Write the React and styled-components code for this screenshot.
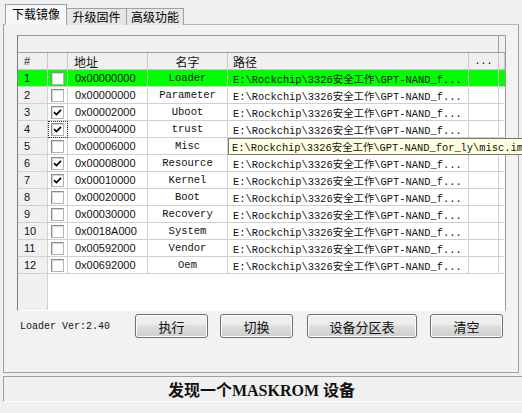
import React from 'react'
import styled, { createGlobalStyle } from 'styled-components'

const GlobalStyle = createGlobalStyle`
  html, body {
    margin: 0;
    padding: 0;
    background: #f0f0f0;
    overflow: hidden;
  }
  body {
    width: 522px;
    height: 413px;
    font-family: "Noto Sans CJK SC", sans-serif;
  }
`

const COLS = '30px 20px 80px 80px 241px 30px 1fr'

const Window = styled.div`
  width: 522px;
  height: 413px;
  box-sizing: border-box;
  padding: 4px 0 0 3px;
  display: flex;
  flex-direction: column;
  background: #f0f0f0;
  overflow: hidden;
`
// 頁籤
const TabBar = styled.div`
  display: flex;
  align-items: flex-end;
  height: 21px;
  padding-left: 2px;
  margin-bottom: -1px;
  position: relative;
  z-index: 1;
`
const Tab = styled.div`
  box-sizing: border-box;
  width: ${props => props.w}px;
  height: ${props => (props.active ? 21 : 17)}px;
  margin-left: ${props => (props.first ? 0 : -1)}px;
  border: 1px solid #a0a0a0;
  border-bottom: ${props => (props.active ? '1px solid #f7f7f7' : 'none')};
  background: ${props => (props.active ? '#f7f7f7' : '#e6e6e6')};
  color: #000;
  font-size: 12px;
  line-height: ${props => (props.active ? 18 : 15)}px;
  text-align: center;
`
const Panel = styled.div`
  box-sizing: border-box;
  width: 516px;
  height: 349px;
  border: 1px solid #a0a0a0;
  border-top-color: #b4b4b4;
  background: #f2f2f2;
  padding: 10px 0 0 13px;
`
// 表格
const Frame = styled.div`
  box-sizing: border-box;
  width: 489px;
  height: 276px;
  border: 1px solid #9a9a9a;
  border-bottom-color: #fff;
  border-left-color: #7a7a7a;
  background: #fff;
  display: flex;
  flex-direction: column;
`
const Strip = styled.div`
  height: 17px;
  box-sizing: border-box;
  background: #f0f0f0;
  display: grid;
  grid-template-columns: 481px 1fr;
  border-bottom: 1px solid #a0a0a0;
  & > div:first-child {
    border-right: 1px solid #a0a0a0;
  }
`
const Row = styled.div`
  position: relative;
  display: grid;
  grid-template-columns: ${COLS};
  height: 17px;
  box-sizing: border-box;
  background: ${props => (props.selected ? '#00ff00' : props.head ? '#f0f0f0' : '#fff')};
  font-size: 11px;
`
const Cell = styled.div`
  box-sizing: border-box;
  height: 17px;
  border-right: 1px solid ${props => (props.last ? 'transparent' : '#d0d0d0')};
  border-bottom: 1px solid #d0d0d0;
  padding: 0 ${props => props.pad || 0}px;
  display: flex;
  align-items: center;
  justify-content: ${props => (props.center ? 'center' : 'flex-start')};
  white-space: nowrap;
  overflow: hidden;
  background: ${props => (props.gray ? '#f0f0f0' : 'transparent')};
  outline: ${props => (props.focus ? '1px dotted #333' : 'none')};
  outline-offset: -1px;
`
const HeadCell = styled(Cell)`
  border-color: #c8c8c8;
  font-family: "Noto Sans CJK SC", sans-serif;
  font-size: 12px;
  color: #111;
`
const NumText = styled.span`
  font-family: "Liberation Sans", sans-serif;
  font-size: 11px;
  color: #111;
`
const MonoText = styled.span`
  font-family: "Liberation Mono", "Noto Sans CJK SC", monospace;
  font-size: ${props => props.size || 10}px;
  color: #111;
`
const Box = styled.span`
  box-sizing: border-box;
  width: 13px;
  height: 13px;
  margin-left: 3px;
  background: #fff;
  border: 1px solid #b4b4b4;
  border-top-color: #8c8c8c;
  border-left-color: #8c8c8c;
  box-shadow: inset 1px 1px 0 #d8d8d8;
  display: flex;
  align-items: center;
  justify-content: center;
`
const Filler = styled.div`
  flex: 1;
  display: grid;
  grid-template-columns: 30px 1fr;
  & > div:first-child {
    background: #f0f0f0;
    border-right: 1px solid #d0d0d0;
  }
`
const Tip = styled.div`
  position: absolute;
  left: 210px;
  top: 0;
  width: 340px;
  height: 17px;
  box-sizing: border-box;
  border: 1px solid #767676;
  background: #ffffe1;
  padding-left: 3px;
  display: flex;
  align-items: center;
  white-space: nowrap;
  overflow: hidden;
  z-index: 2;
`
// 下方
const Footer = styled.div`
  display: flex;
  align-items: center;
  height: 24px;
  margin-top: 3px;
`
const LoaderVer = styled.div`
  width: 118px;
  padding-left: 3px;
  box-sizing: border-box;
  font-family: "Liberation Mono", monospace;
  font-size: 10px;
  color: #111;
`
const Button = styled.button`
  box-sizing: border-box;
  width: ${props => props.w}px;
  height: 24px;
  margin-right: ${props => props.mr || 0}px;
  border: 1px solid #707070;
  border-radius: 3px;
  background: linear-gradient(#f2f2f2 0%, #ebebeb 45%, #dddddd 50%, #cfcfcf 100%);
  box-shadow: inset 0 0 0 1px #fcfcfc;
  font-family: "Noto Sans CJK SC", sans-serif;
  font-size: 13px;
  color: #111;
  padding: 0;
`
const StatusBar = styled.div`
  margin-top: 3px;
  height: 26px;
  box-sizing: border-box;
  border-top: 1px solid #a0a0a0;
  border-left: 1px solid #a0a0a0;
  border-bottom: 1px solid #fff;
  display: flex;
  align-items: center;
  justify-content: center;
  padding-right: 3px;
  font-family: "Liberation Serif", "Noto Sans CJK SC", serif;
  font-weight: 700;
  font-size: 16px;
  color: #111;
`

const PATH = 'E:\\Rockchip\\3326安全工作\\GPT-NAND_f...'
const FULL_PATH = 'E:\\Rockchip\\3326安全工作\\GPT-NAND_for_ly\\misc.img'

const rows = [
  { addr: '0x00000000', name: 'Loader', checked: false },
  { addr: '0x00000000', name: 'Parameter', checked: false },
  { addr: '0x00002000', name: 'Uboot', checked: true },
  { addr: '0x00004000', name: 'trust', checked: true, focus: true },
  { addr: '0x00006000', name: 'Misc', checked: false, tip: true },
  { addr: '0x00008000', name: 'Resource', checked: true },
  { addr: '0x00010000', name: 'Kernel', checked: true },
  { addr: '0x00020000', name: 'Boot', checked: false },
  { addr: '0x00030000', name: 'Recovery', checked: false },
  { addr: '0x0018A000', name: 'System', checked: false },
  { addr: '0x00592000', name: 'Vendor', checked: false },
  { addr: '0x00692000', name: 'Oem', checked: false }
]

const Check = () => (
  <svg width="9" height="9" viewBox="0 0 9 9">
    <path d="M1 4.2 L3.4 6.6 L8 1.8" stroke="#000" strokeWidth="1.7" fill="none" />
  </svg>
)

const tabs = [
  { id: 1, name: '下载镜像', w: 62 },
  { id: 2, name: '升级固件', w: 61 },
  { id: 3, name: '高级功能', w: 58 }
]

export default function App() {
  return (
    <Window>
      <GlobalStyle />
      <TabBar>
        {tabs.map((t, i) => (
          <Tab key={t.id} w={t.w} active={i === 0} first={i === 0}>
            {t.name}
          </Tab>
        ))}
      </TabBar>
      <Panel>
        <Frame>
          <Strip>
            <div />
            <div />
          </Strip>
          <Row head>
            <HeadCell pad={6}>
              <NumText>#</NumText>
            </HeadCell>
            <HeadCell />
            <HeadCell pad={6}>地址</HeadCell>
            <HeadCell center>名字</HeadCell>
            <HeadCell pad={5}>路径</HeadCell>
            <HeadCell center>
              <MonoText>...</MonoText>
            </HeadCell>
            <HeadCell last />
          </Row>
          {rows.map((r, i) => (
            <Row key={i} selected={i === 0}>
              <Cell pad={6} gray={i !== 0}>
                <NumText>{i + 1}</NumText>
              </Cell>
              <Cell focus={r.focus}>
                <Box>{r.checked && <Check />}</Box>
              </Cell>
              <Cell pad={7}>
                <NumText>{r.addr}</NumText>
              </Cell>
              <Cell center>
                <MonoText size={10.5}>{r.name}</MonoText>
              </Cell>
              <Cell pad={5}>
                <MonoText size={10.4}>{PATH}</MonoText>
              </Cell>
              <Cell />
              <Cell last />
              {r.tip && (
                <Tip>
                  <MonoText size={10.4}>{FULL_PATH}</MonoText>
                </Tip>
              )}
            </Row>
          ))}
          <Filler>
            <div />
            <div />
          </Filler>
        </Frame>
        <Footer>
          <LoaderVer>Loader Ver:2.40</LoaderVer>
          <Button w={73} mr={12}>执行</Button>
          <Button w={73} mr={14}>切换</Button>
          <Button w={110} mr={13}>设备分区表</Button>
          <Button w={73}>清空</Button>
        </Footer>
      </Panel>
      <StatusBar>发现一个MASKROM 设备</StatusBar>
    </Window>
  )
}
